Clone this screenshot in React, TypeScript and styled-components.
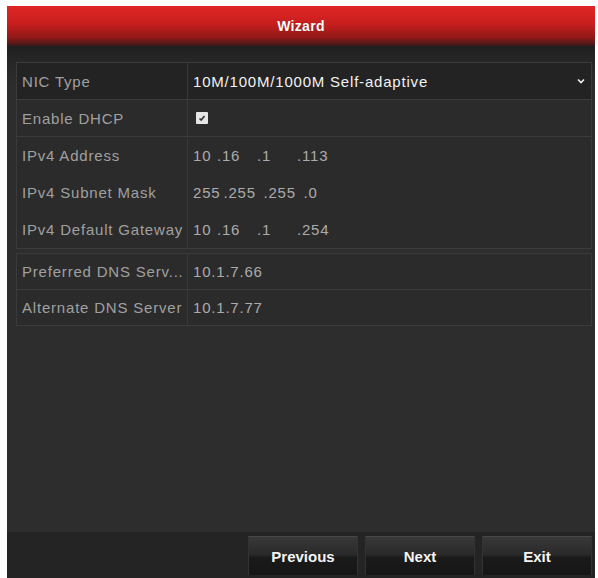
import React from 'react';
import styled, { createGlobalStyle } from 'styled-components';

const GlobalStyle = createGlobalStyle`
  body {
    margin: 0;
    background: #fff;
    font-family: "Liberation Sans", Arial, sans-serif;
  }
`

const Window = styled.div`
  margin: 6px 0 0 7px;
  width: 588px;
  height: 572px;
  display: flex;
  flex-direction: column;
  background: #2d2d2d;
`

const TitleBar = styled.div`
  height: 40px;
  display: flex;
  align-items: center;
  justify-content: center;
  background: linear-gradient(#e02626 0%, #c81e1e 45%, #8e1818 80%, #3a1a1a 100%);
  color: #fff;
  font-size: 14px;
  font-weight: bold;
  letter-spacing: 0.3px;
  text-shadow: 0 0 1px rgba(0, 0, 0, 0.4);
`

const Content = styled.div`
  flex: 1;
  display: flex;
  flex-direction: column;
  gap: 4px;
  padding: 16px 3px 0 9px;
  background: linear-gradient(#1f1f1f 0px, #262626 14px, #2d2d2d 40px);
`

const Group = styled.div`
  border: 1px solid #3b3b3b;
  background: #2b2b2b;
`

const Row = styled.div<{ $divided?: boolean; $dark?: boolean; $h?: number }>`
  display: grid;
  grid-template-columns: 171px 1fr;
  height: ${p => p.$h ?? 37}px;
  border-bottom: ${p => (p.$divided ? '1px solid #3b3b3b' : 'none')};
  background: ${p => (p.$dark ? '#232323' : 'transparent')};
  box-sizing: border-box;
`

const Label = styled.div`
  display: flex;
  align-items: center;
  padding-left: 5px;
  border-right: 1px solid #383838;
  color: #a0a0a0;
  font-size: 15px;
  letter-spacing: 0.8px;
  white-space: nowrap;
  overflow: hidden;
`

const Value = styled.div<{ $bright?: boolean }>`
  display: flex;
  align-items: center;
  padding: 0 6px 0 5px;
  color: ${p => (p.$bright ? '#f2f2f2' : '#ababab')};
  font-size: 15px;
  letter-spacing: 0.8px;
  white-space: nowrap;
`

const Grow = styled.span`
  flex: 1;
`

const Octet = styled.span<{ $first?: boolean }>`
  display: inline-block;
  min-width: ${p => (p.$first ? 21 : 37)}px;
  padding-right: 3px;
`

const CheckBox = styled.span`
  width: 12px;
  height: 12px;
  margin-left: 3px;
  border-radius: 1px;
  background: #e6e6e6;
  display: flex;
  align-items: center;
  justify-content: center;
`

const Footer = styled.div`
  height: 46px;
  box-sizing: border-box;
  display: flex;
  justify-content: flex-end;
  gap: 7px;
  padding: 4px 3px 3px 0;
  background: #242424;
`

const Button = styled.button`
  width: 110px;
  height: 39px;
  border: none;
  border-top: 1px solid #474747;
  border-left: 1px solid #333;
  border-right: 1px solid #333;
  background: linear-gradient(#383838 0%, #2a2a2a 45%, #1a1a1a 55%, #161616 100%);
  color: #f4f4f4;
  font-family: "Liberation Sans", Arial, sans-serif;
  font-size: 15px;
  font-weight: bold;
  padding: 0;
`

const Ip = ({ value }: { value: string }) => (
  <>
    {value.split('.').map((o, i) => (
      <Octet key={i} $first={i === 0}>{i === 0 ? o : '.' + o}</Octet>
    ))}
  </>
)

function App() {
  return (
    <>
      <GlobalStyle />
      <Window>
        <TitleBar>Wizard</TitleBar>
        <Content>
          <Group>
            <Row $divided $dark>
              <Label>NIC Type</Label>
              <Value $bright>
                <Grow>10M/100M/1000M Self-adaptive</Grow>
                <svg width="8" height="6" viewBox="0 0 8 6">
                  <path d="M1 1.5 L4 4.5 L7 1.5" stroke="#eee" strokeWidth="1.6" fill="none" />
                </svg>
              </Value>
            </Row>
            <Row $divided>
              <Label>Enable DHCP</Label>
              <Value>
                <CheckBox>
                  <svg width="8" height="8" viewBox="0 0 8 8">
                    <path d="M1.5 4.5 L3.2 6 L6.5 2" stroke="#333" strokeWidth="1.6" fill="none" />
                  </svg>
                </CheckBox>
              </Value>
            </Row>
            <Row>
              <Label>IPv4 Address</Label>
              <Value><Ip value="10.16.1.113" /></Value>
            </Row>
            <Row>
              <Label>IPv4 Subnet Mask</Label>
              <Value><Ip value="255.255.255.0" /></Value>
            </Row>
            <Row>
              <Label>IPv4 Default Gateway</Label>
              <Value><Ip value="10.16.1.254" /></Value>
            </Row>
          </Group>
          <Group>
            <Row $divided $h={36}>
              <Label>Preferred DNS Serv...</Label>
              <Value>10.1.7.66</Value>
            </Row>
            <Row $h={35}>
              <Label>Alternate DNS Server</Label>
              <Value>10.1.7.77</Value>
            </Row>
          </Group>
        </Content>
        <Footer>
          <Button>Previous</Button>
          <Button>Next</Button>
          <Button>Exit</Button>
        </Footer>
      </Window>
    </>
  );
}

export default App;
